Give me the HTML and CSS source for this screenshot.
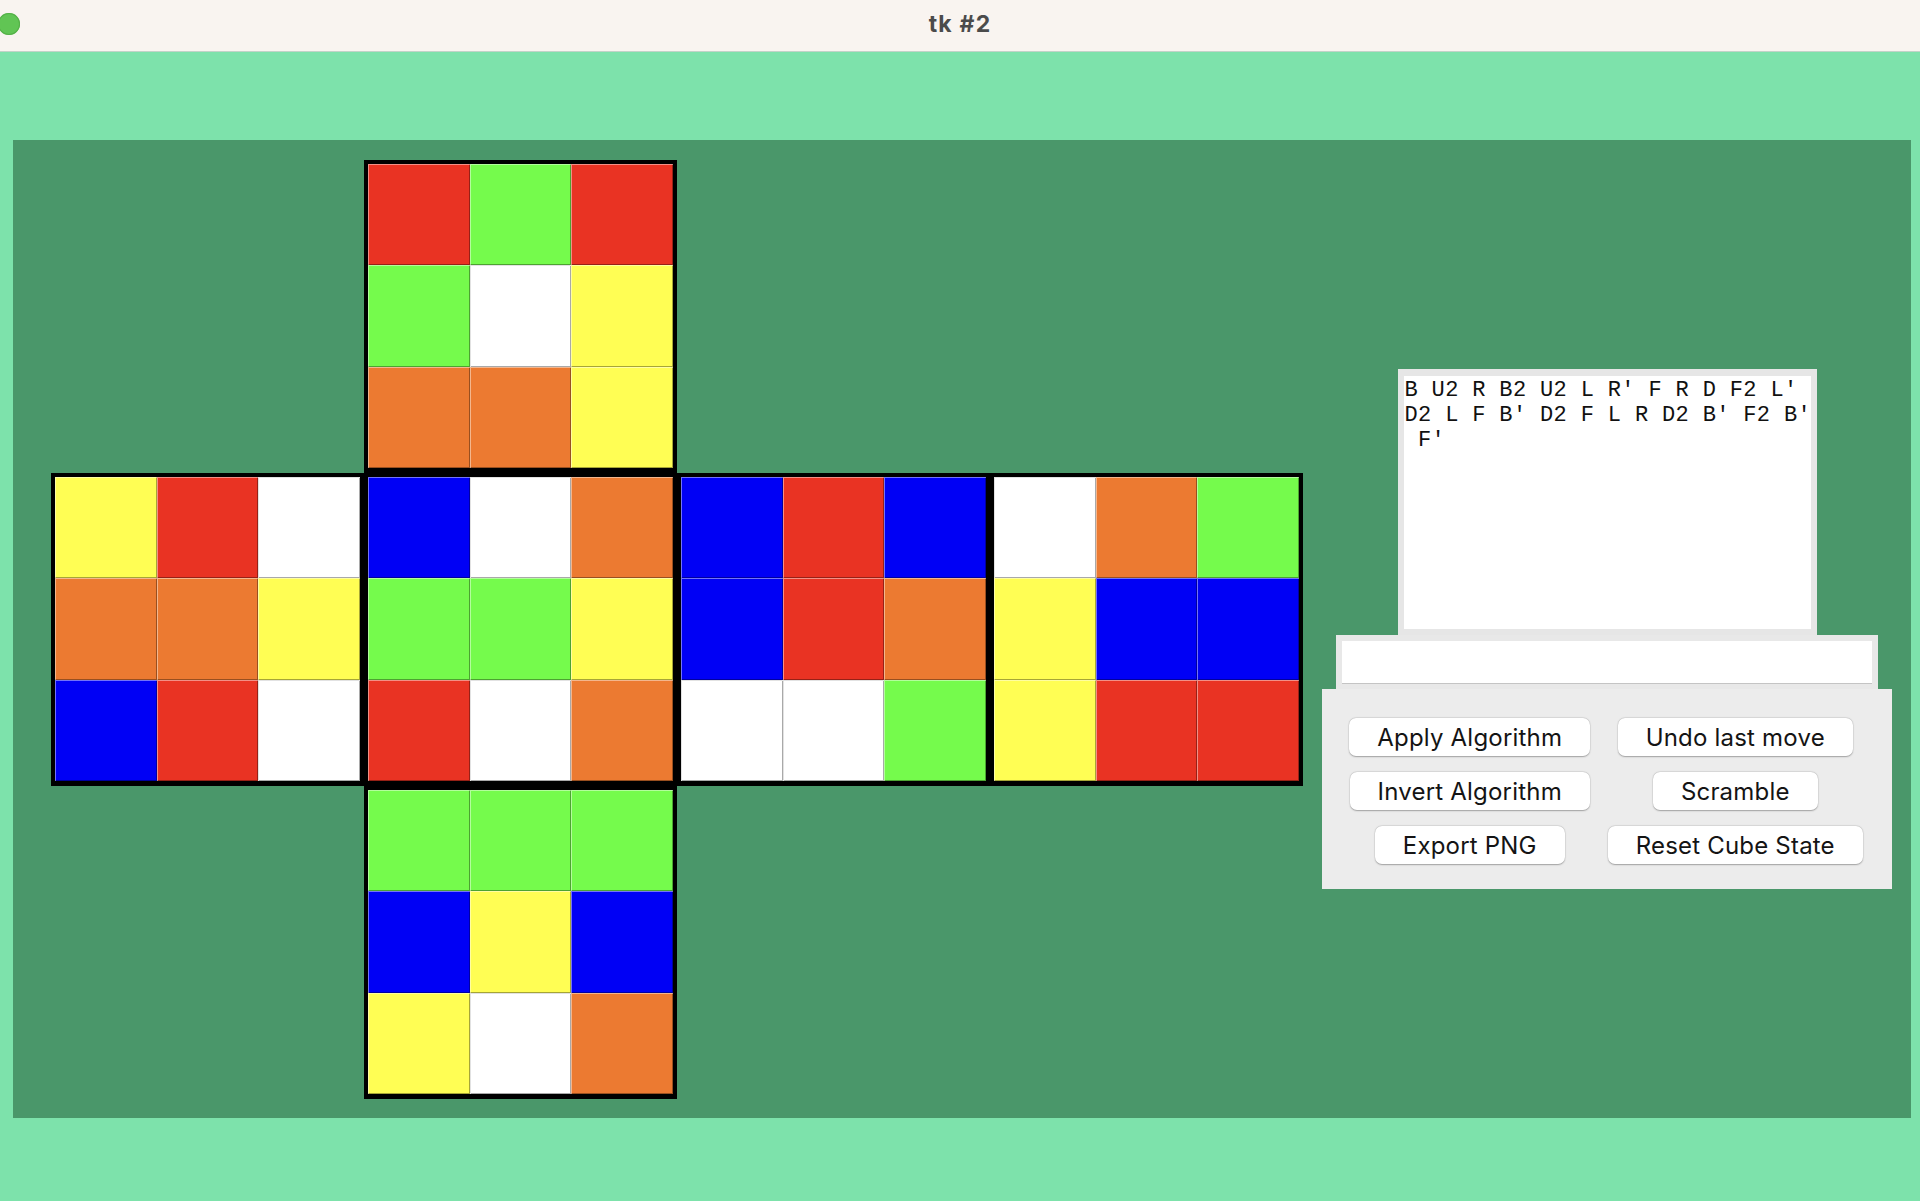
FILE: index.html
```html
<!DOCTYPE html>
<html lang="en">
<head>
<meta charset="utf-8">
<title>tk #2</title>
<link rel="stylesheet" href="styles.css">
</head>
<body>
<div class="titlebar">
  <span class="dot"></span>
  <span class="title">tk #2</span>
</div>
<div class="window">
  <div class="panel">
    <div class="net">
      <div class="face up">
        <div class="s red"></div><div class="s green"></div><div class="s red"></div>
        <div class="s green"></div><div class="s white"></div><div class="s yellow"></div>
        <div class="s orange"></div><div class="s orange"></div><div class="s yellow"></div>
      </div>
      <div class="face left">
        <div class="s yellow"></div><div class="s red"></div><div class="s white"></div>
        <div class="s orange"></div><div class="s orange"></div><div class="s yellow"></div>
        <div class="s blue"></div><div class="s red"></div><div class="s white"></div>
      </div>
      <div class="face front">
        <div class="s blue"></div><div class="s white"></div><div class="s orange"></div>
        <div class="s green"></div><div class="s green"></div><div class="s yellow"></div>
        <div class="s red"></div><div class="s white"></div><div class="s orange"></div>
      </div>
      <div class="face right">
        <div class="s blue"></div><div class="s red"></div><div class="s blue"></div>
        <div class="s blue"></div><div class="s red"></div><div class="s orange"></div>
        <div class="s white"></div><div class="s white"></div><div class="s green"></div>
      </div>
      <div class="face back">
        <div class="s white"></div><div class="s orange"></div><div class="s green"></div>
        <div class="s yellow"></div><div class="s blue"></div><div class="s blue"></div>
        <div class="s yellow"></div><div class="s red"></div><div class="s red"></div>
      </div>
      <div class="face down">
        <div class="s green"></div><div class="s green"></div><div class="s green"></div>
        <div class="s blue"></div><div class="s yellow"></div><div class="s blue"></div>
        <div class="s yellow"></div><div class="s white"></div><div class="s orange"></div>
      </div>
    </div>
    <div class="side">
      <div class="controls">
        <div class="textframe">
          <div class="textarea">B U2 R B2 U2 L R' F R D F2 L' 
D2 L F B' D2 F L R D2 B' F2 B'
 F'</div>
        </div>
        <div class="entryframe">
          <div class="entry"></div>
        </div>
        <div class="buttons">
          <button class="btn">Apply Algorithm</button>
          <button class="btn">Undo last move</button>
          <button class="btn">Invert Algorithm</button>
          <button class="btn">Scramble</button>
          <button class="btn">Export PNG</button>
          <button class="btn">Reset Cube State</button>
        </div>
      </div>
    </div>
  </div>
</div>
</body>
</html>
```

FILE: styles.css
```css
html, body {
  margin: 0;
  padding: 0;
}
body {
  width: 1920px;
  height: 1201px;
  overflow: hidden;
  background: #7de2ab;
  font-family: Inter, "Liberation Sans", sans-serif;
}

.titlebar {
  position: relative;
  height: 51px;
  background: #f9f4f0;
  border-bottom: 1px solid #c2d3c8;
  display: flex;
  align-items: center;
  justify-content: center;
}
.dot {
  position: absolute;
  left: -2px;
  top: 13px;
  width: 22px;
  height: 22px;
  border-radius: 50%;
  background: #61c554;
  box-shadow: inset 0 0 0 1px #55b048;
}
.title {
  font-family: Inter, "Liberation Sans", sans-serif;
  font-weight: 700;
  font-size: 23px;
  color: #4b4b4b;
  letter-spacing: 1.2px;
  margin-top: -3px;
}

.window {
  padding: 88px 9px 0 13px;
}
.panel {
  height: 978px;
  background: #4a976a;
  display: flex;
  align-items: center;
  padding-left: 38px;
}

.net {
  display: grid;
  grid-template-columns: repeat(4, 313px);
  grid-template-rows: repeat(3, 313px);
}
.face {
  box-sizing: border-box;
  border: 4px solid #000;
  background: #000;
  display: grid;
  grid-template-columns: repeat(3, 1fr);
  grid-template-rows: repeat(3, 1fr);
}
.up { grid-column: 2; grid-row: 1; }
.left { grid-column: 1; grid-row: 2; }
.front { grid-column: 2; grid-row: 2; }
.right { grid-column: 3; grid-row: 2; }
.back { grid-column: 4; grid-row: 2; }
.down { grid-column: 2; grid-row: 3; }

.s {
  box-shadow: inset 1px 1px 0 rgba(255, 255, 255, 0.45), inset -1px -1px 0 rgba(0, 0, 0, 0.35);
}
.red { background: #e93323; }
.green { background: #75fb4c; }
.yellow { background: #fffe54; }
.orange { background: #ec7a31; }
.blue { background: #0000f5; }
.white {
  background: #ffffff;
  box-shadow: inset 1px 1px 0 #e2e2e2, inset -1px -1px 0 #a9a9a9;
}

.side {
  flex: 1;
  display: flex;
  justify-content: center;
  align-items: center;
  align-self: stretch;
}
.controls {
  display: flex;
  flex-direction: column;
  align-items: center;
}
.textframe {
  box-sizing: border-box;
  width: 419px;
  height: 266px;
  padding: 7px 6px 6px 6px;
  background: #e6e6e6;
}
.textarea {
  box-sizing: border-box;
  height: 100%;
  background: #fff;
  padding: 2px 0 0 1px;
  font-family: "Liberation Mono", "DejaVu Sans Mono", monospace;
  font-size: 22px;
  letter-spacing: 0.35px;
  line-height: 25px;
  color: #111;
  white-space: pre;
}
.entryframe {
  box-sizing: border-box;
  width: 542px;
  height: 54px;
  padding: 6px 6px 5px 6px;
  background: #e8e8e8;
}
.entry {
  height: 100%;
  background: #fff;
  border-bottom: 1px solid #c4c4c4;
  box-sizing: border-box;
}
.buttons {
  box-sizing: border-box;
  width: 570px;
  height: 200px;
  background: #ececec;
  padding: 29px 19px 0 19px;
  display: grid;
  grid-template-columns: 257.5px 273.5px;
  grid-auto-rows: 38px;
  row-gap: 16px;
  justify-items: center;
}
.btn {
  height: 38px;
  padding: 0 28px;
  border: none;
  border-radius: 7px;
  background: #fff;
  box-shadow: 0 0.5px 1.5px rgba(0, 0, 0, 0.3), 0 0 0 0.5px rgba(0, 0, 0, 0.06);
  font-family: Inter, "Liberation Sans", sans-serif;
  font-size: 24px;
  letter-spacing: 0.2px;
  color: #141414;
  white-space: nowrap;
  cursor: default;
}
```
